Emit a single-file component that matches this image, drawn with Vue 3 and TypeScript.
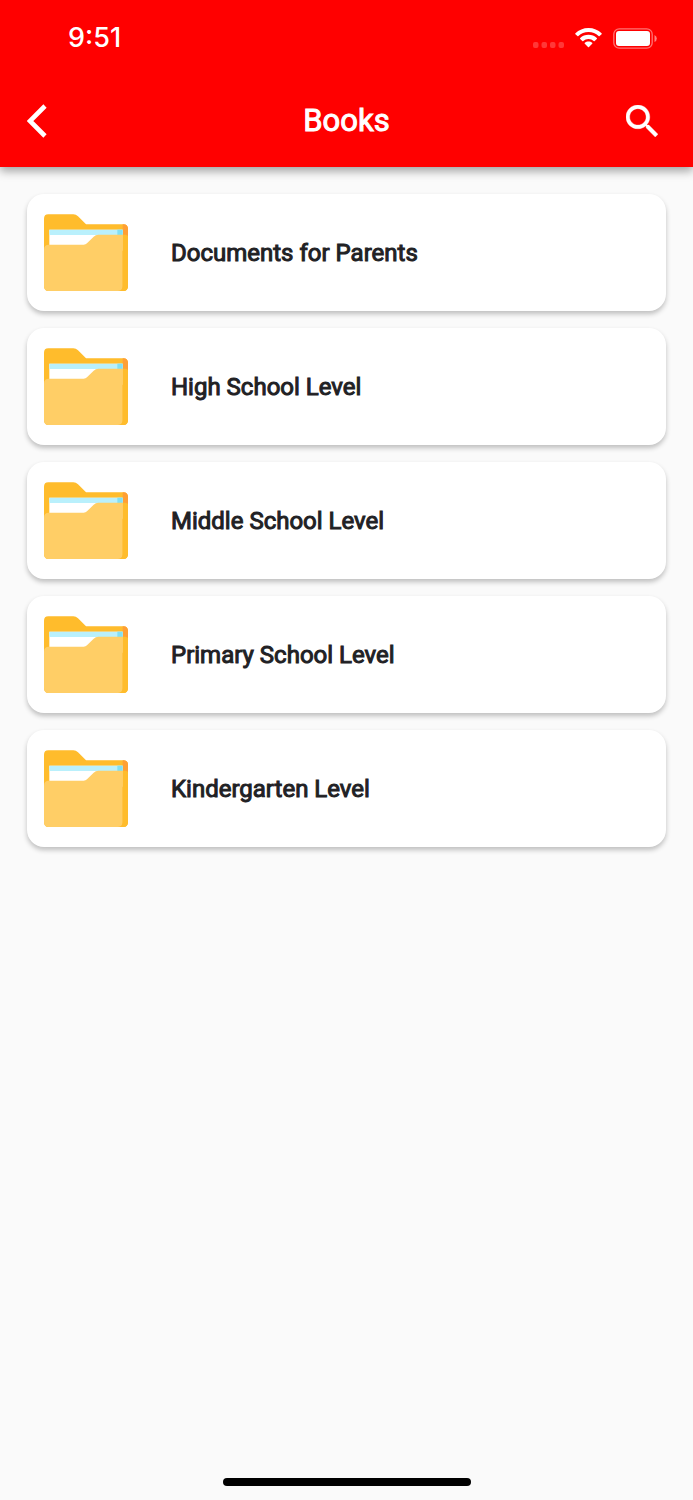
<script setup lang="ts">
interface Folder {
  id: number
  name: string
}

const folders: Folder[] = [
  { id: 1, name: 'Documents for Parents' },
  { id: 2, name: 'High School Level' },
  { id: 3, name: 'Middle School Level' },
  { id: 4, name: 'Primary School Level' },
  { id: 5, name: 'Kindergarten Level' },
]
</script>

<template>
  <div class="screen">
    <header class="header">
      <div class="status">
        <span class="time">9:51</span>
        <div class="indicators">
          <svg class="signal" viewBox="0 0 32 6" aria-hidden="true">
            <rect x="1" y="0" width="5.500" height="6" rx="2" />
            <rect x="9.500" y="0" width="5.500" height="6" rx="2" />
            <rect x="18" y="0" width="5.500" height="6" rx="2" />
            <rect x="26.500" y="0" width="5.500" height="6" rx="2" />
          </svg>
          <svg class="wifi" viewBox="0 0 27 20" aria-hidden="true">
            <path d="M13.500 0C18.600 0 23.200 2 26.600 5.200Q27 5.700 26.600 6.200L24.600 8.100Q24.100 8.500 23.600 8.100C20.900 5.600 17.400 4.100 13.500 4.100S6.100 5.600 3.400 8.100Q2.900 8.500 2.400 8.100L.4 6.200Q0 5.700.4 5.200C3.800 2 8.400 0 13.500 0Z" />
            <path d="M13.500 6.800C16.700 6.800 19.600 8 21.800 10Q22.300 10.500 21.800 11L19.700 13Q19.200 13.400 18.700 13C17.300 11.700 15.500 11 13.500 11S9.700 11.700 8.300 13Q7.800 13.400 7.300 13L5.200 11Q4.700 10.500 5.200 10C7.400 8 10.300 6.800 13.500 6.800Z" />
            <path d="M13.500 13.400C14.900 13.400 16.200 13.900 17.200 14.700Q17.700 15.200 17.200 15.700L14 18.900Q13.500 19.400 13 18.900L9.800 15.700Q9.300 15.200 9.800 14.700C10.800 13.900 12.100 13.400 13.500 13.400Z" />
          </svg>
          <svg class="battery" viewBox="0 0 44 21" aria-hidden="true">
            <rect x=".8" y=".8" width="38.400" height="19.400" rx="5.500" fill="none" stroke="#fff" stroke-opacity=".45" stroke-width="1.300" />
            <rect x="3" y="3" width="34" height="15" rx="3" />
            <path d="M41.500 7Q43.800 8 43.800 10.500T41.500 14Z" fill-opacity=".5" />
          </svg>
        </div>
      </div>
      <div class="toolbar">
        <button class="icon-button" type="button" aria-label="Back">
          <svg class="back" viewBox="0 0 20 34" aria-hidden="true">
            <path d="M18 2L3 17L18 32" fill="none" stroke="#fff" stroke-width="4.600" />
          </svg>
        </button>
        <h1 class="title">Books</h1>
        <button class="icon-button end" type="button" aria-label="Search">
          <svg class="search" viewBox="3 3 17.500 17.500" aria-hidden="true">
            <path d="M15.500 14h-.79l-.28-.27C15.410 12.590 16 11.110 16 9.500 16 5.910 13.090 3 9.500 3S3 5.910 3 9.500 5.910 16 9.500 16c1.610 0 3.090-.59 4.230-1.570l.27.28v.79l5 4.990L20.490 19l-4.990-5zm-6 0C7.010 14 5 11.990 5 9.500S7.010 5 9.500 5 14 7.010 14 9.500 11.990 14 9.500 14z" />
          </svg>
        </button>
      </div>
    </header>

    <main class="content">
      <ul class="list">
        <li v-for="folder in folders" :key="folder.id">
          <button class="card" type="button">
            <svg class="folder" viewBox="0 0 252 231" aria-hidden="true">
              <path d="M0 14Q0 1 13 1H88Q96 1 102 7L126 31H238Q252 31 252 45V217Q252 231 238 231H14Q0 231 0 217Z" fill="#ffbc2c" />
              <path d="M236 31H238Q252 31 252 45V66L236 62Z" fill="#ff9f35" />
              <path d="M16 47H236V110H16Z" fill="#fff" />
              <path d="M16 47H236V63H16Z" fill="#b9f0fc" />
              <path d="M220 47H236V63H220Z" fill="#82dff3" />
              <path d="M0 107Q0 92 15 92H119Q125 92 129 88L149 68Q155 62 163 62H236V217Q236 231 222 231H14Q0 231 0 217Z" fill="#ffce66" />
              <path d="M236 62H244Q252 62 252 70V217Q252 231 238 231H222Q236 231 236 217Z" fill="#ffbc2c" />
            </svg>
            <span class="name">{{ folder.name }}</span>
          </button>
        </li>
      </ul>
    </main>

    <div class="home-indicator"></div>
  </div>
</template>

<style>
body {
  margin: 0;
  background: #fafafa;
}
</style>

<style scoped>
.screen {
  display: flex;
  flex-direction: column;
  min-height: 100vh;
  background: #fafafa;
  font-family: Roboto, "Liberation Sans", sans-serif;
}

.header {
  padding-bottom: 2px;
  background: #ff0000;
  box-shadow: 0 4px 9px rgba(0, 0, 0, 0.36);
}

.status {
  display: flex;
  align-items: center;
  justify-content: space-between;
  height: 76px;
  padding: 0 36px 0 68px;
  color: #fff;
}

.time {
  font-family: Inter, "Liberation Sans", sans-serif;
  font-size: 27px;
  font-weight: 500;
  line-height: 34px;
}

.indicators {
  display: flex;
  align-items: center;
  gap: 11px;
}

.indicators svg {
  display: block;
  fill: #fff;
}

.signal {
  width: 32px;
  height: 6px;
  margin-top: 14px;
  opacity: 0.22;
}

.wifi {
  width: 27px;
  height: 20px;
}

.battery {
  width: 44px;
  height: 21px;
}

.toolbar {
  display: grid;
  grid-template-columns: 1fr auto 1fr;
  align-items: center;
  height: 89px;
  padding: 0 27px;
}

.icon-button {
  display: flex;
  align-items: center;
  width: 48px;
  height: 48px;
  padding: 0;
  border: 0;
  background: none;
  cursor: pointer;
}

.end {
  justify-content: flex-end;
  justify-self: end;
  padding-right: 8px;
}

.back {
  width: 20px;
  height: 34px;
}

.search {
  width: 32px;
  height: 32px;
  fill: #fff;
  stroke: #fff;
  stroke-width: 0.2;
}

.title {
  margin: 0;
  color: #fff;
  font-size: 31px;
  font-weight: 400;
  line-height: 40px;
  -webkit-text-stroke: 1px currentColor;
}

.content {
  flex: 1;
  padding: 27px;
}

.list {
  display: flex;
  flex-direction: column;
  gap: 17px;
  margin: 0;
  padding: 0;
  list-style: none;
}

.card {
  display: flex;
  align-items: center;
  gap: 43px;
  box-sizing: border-box;
  width: 100%;
  height: 117px;
  padding: 0 17px;
  border: 0;
  border-radius: 17px;
  background: #fff;
  box-shadow: 0 3px 5px rgba(0, 0, 0, 0.24);
  color: #212124;
  font-family: inherit;
  text-align: left;
  cursor: pointer;
}

.folder {
  flex: none;
  width: 84px;
  height: 77px;
}

.name {
  font-size: 24px;
  font-weight: 400;
  line-height: 32px;
  -webkit-text-stroke: 1px currentColor;
}

.home-indicator {
  align-self: center;
  width: 248px;
  height: 8px;
  margin-bottom: 14px;
  border-radius: 4px;
  background: #000;
}
</style>
